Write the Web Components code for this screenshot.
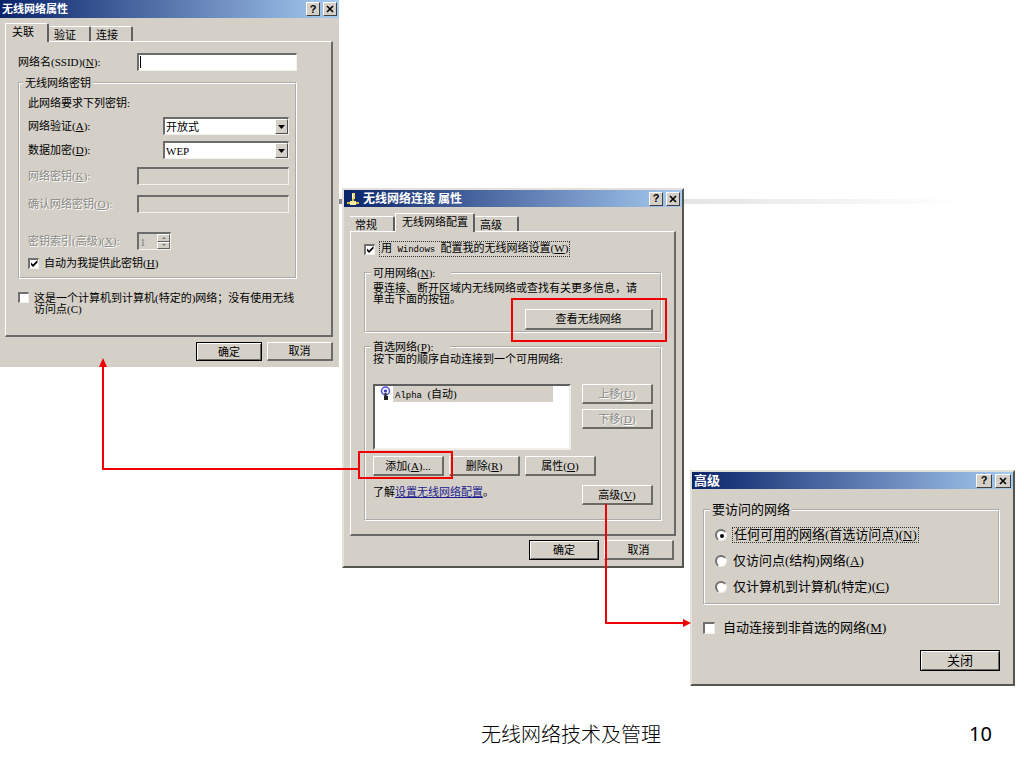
<!DOCTYPE html>
<html lang="zh-CN">
<head>
<meta charset="utf-8">
<title>无线网络技术及管理</title>
<style>
  body { margin: 0; background: #fff; color: #000; font: 11px/12px "Liberation Serif", "Noto Sans CJK SC", serif; }
  .mono { font: 9px/11px "Liberation Mono", monospace; white-space: pre; }
  a { color: #1c1c8c; }
  u { text-underline-offset: 1px; }
  p { margin: 0; }
  .ssid { left: 0; top: 0; width: 339px; --edge: 0px; --title-height: 18px; --tab-inset: 5px; --tab-top: 5px; }
  .conn { left: 342px; top: 188px; width: 342px; --tab-inset: 6px; --title-size: 12px; }
  .adv { left: 690px; top: 470px; width: 325px; font-size: 13px; line-height: 14px; --title-size: 13px; --cap-width: 16px; }
  .ssid xp-panel { padding: 8px 34px 19px 12px; }
  .conn xp-panel { padding: 8px 12px 13px 13px; }
  .ssid xp-group { margin: 3px 0 13px; --pad: 3px 6px 3px 8px; --legend-start: -5px; }
  .ssid xp-group xp-field { --label: 109px; }
  .ssid .hint { line-height: 22px; }
  .ssid .indent { --indent: 26px; --row: 24px; }
  .ssid .wide { --row: 28px; }
  .ssid .spin { --row: 22px; margin-top: 12px; }
  .ssid .auto { --row: 22px; }
  .ssid .adhoc { line-height: 11px; align-items: start; }
  .actions { display: flex; justify-content: flex-end; }
  .ssid .actions { gap: 5px; padding: 5px 6px 6px; --h: 19px; --w: 66px; }
  .conn .actions { gap: 5px; padding: 4px 8px 6px; --h: 20px; --w: 70px; }
  .conn .manage { --row: 18px; }
  .conn .available { margin-top: 9px; --pad: 4px 7px 1px 7px; --legend-end: 16px; line-height: 11px; }
  .conn .available xp-button { --w: 128px; --h: 21px; }
  .conn .preferred { margin-top: 8px; --pad: 0 7px 14px 7px; --legend-end: 16px; }
  .right { display: flex; justify-content: flex-end; margin-top: 4px; }
  .split { display: flex; justify-content: space-between; margin-top: 19px; --w: 71px; --h: 20px; }
  .stack { display: flex; flex-direction: column; gap: 5px; }
  .row { display: flex; gap: 5px; margin-top: 6px; --w: 71px; --h: 20px; }
  .more { display: flex; justify-content: space-between; margin-top: 9px; --w: 71px; --h: 20px; }
  .more p { line-height: 14px; }
  .adv xp-group { margin: 14px 13px 14px 11px; --pad: 5px 10px 3px 10px; --legend-start: -5px; }
  .adv xp-radio { --row: 26px; --mark: 12px; --gap: 5px; }
  .adv xp-check { --row: 18px; --mark: 12px; --gap: 7px; margin-left: 11px; }
  .adv .actions { padding: 13px 13px 13px 0; --w: 80px; --h: 21px; }
</style>
</head>
<body>
<slide-page>
  <xp-window class="ssid" heading="无线网络属性">
    <xp-tabs><xp-tab selected style="--tab-width:44px">关联</xp-tab><xp-tab style="--tab-width:42px">验证</xp-tab><xp-tab style="--tab-width:42px">连接</xp-tab></xp-tabs>
    <xp-panel>
      <xp-field kind="text" caret style="--label:119px;--row:24px">网络名(SSID)(<u>N</u>):</xp-field>
      <xp-group>
        <span slot="legend">无线网络密钥</span>
        <p class="hint">此网络要求下列密钥:</p>
        <xp-field class="indent" kind="select" value="开放式">网络验证(<u>A</u>):</xp-field>
        <xp-field class="indent" kind="select" value="WEP">数据加密(<u>D</u>):</xp-field>
        <xp-field class="wide" kind="text" disabled>网络密钥(<u>K</u>):</xp-field>
        <xp-field class="wide" kind="text" disabled>确认网络密钥(<u>O</u>):</xp-field>
        <xp-field class="spin" kind="spin" value="1" disabled>密钥索引(高级)(<u>X</u>):</xp-field>
        <xp-check class="auto" checked>自动为我提供此密钥(<u>H</u>)</xp-check>
      </xp-group>
      <xp-check class="adhoc">这是一个计算机到计算机(特定的)网络；没有使用无线<br>访问点(C)</xp-check>
    </xp-panel>
    <div class="actions"><xp-button primary>确定</xp-button><xp-button>取消</xp-button></div>
  </xp-window>

  <xp-window class="conn" heading="无线网络连接 属性" icon>
    <xp-tabs><xp-tab style="--tab-width:45px">常规</xp-tab><xp-tab selected style="--tab-width:80px">无线网络配置</xp-tab><xp-tab style="--tab-width:44px">高级</xp-tab></xp-tabs>
    <xp-panel>
      <xp-check class="manage" checked focused>用<span class="mono"> Windows </span>配置我的无线网络设置(<u>W</u>)</xp-check>
      <xp-group class="available">
        <span slot="legend">可用网络(<u>N</u>):</span>
        <p>要连接、断开区域内无线网络或查找有关更多信息，请<br>单击下面的按钮。</p>
        <div class="right"><xp-button>查看无线网络</xp-button></div>
      </xp-group>
      <xp-group class="preferred">
        <span slot="legend">首选网络(<u>P</u>):</span>
        <p>按下面的顺序自动连接到一个可用网络:</p>
        <div class="split">
          <xp-list><span class="mono">Alpha </span>(自动)</xp-list>
          <div class="stack"><xp-button disabled>上移(<u>U</u>)</xp-button><xp-button disabled>下移(<u>D</u>)</xp-button></div>
        </div>
        <div class="row"><xp-button>添加(<u>A</u>)...</xp-button><xp-button>删除(<u>R</u>)</xp-button><xp-button>属性(<u>O</u>)</xp-button></div>
        <div class="more"><p>了解<a href="#setup">设置无线网络配置</a>。</p><xp-button>高级(<u>V</u>)</xp-button></div>
      </xp-group>
    </xp-panel>
    <div class="actions"><xp-button primary>确定</xp-button><xp-button>取消</xp-button></div>
  </xp-window>

  <xp-window class="adv" heading="高级">
    <xp-group>
      <span slot="legend">要访问的网络</span>
      <xp-radio checked focused>任何可用的网络(首选访问点)(<u>N</u>)</xp-radio>
      <xp-radio>仅访问点(结构)网络(<u>A</u>)</xp-radio>
      <xp-radio>仅计算机到计算机(特定)(<u>C</u>)</xp-radio>
    </xp-group>
    <xp-check>自动连接到非首选的网络(<u>M</u>)</xp-check>
    <div class="actions"><xp-button primary>关闭</xp-button></div>
  </xp-window>

  <flow-arrows></flow-arrows>
  <span slot="footer">无线网络技术及管理</span>
  <span slot="number">10</span>
</slide-page>

<script>
const define = (name, render) => customElements.define(name, class extends HTMLElement {
  constructor() {
    super();
    this.attachShadow({ mode: "open" }).innerHTML = render(this);
  }
});

define("slide-page", () => `
  <style>
    :host { display: flex; flex-direction: column; position: relative; min-height: 100vh; overflow: hidden; }
    main { flex: 1; }
    .rule { position: absolute; left: 0; right: 0; top: 199px; height: 5px;
      background: linear-gradient(90deg, #505068, #888894 33%, #e4e4e4 67%, #fff 94%); }
    footer { display: grid; grid-template-columns: 1fr auto 1fr; align-items: center; padding: 0 32px 19px 150px;
      font: 300 20px/30px "Noto Sans CJK SC", sans-serif; }
    .num { grid-column: 3; justify-self: end; font: 20px/30px "Noto Sans", sans-serif; }
    .name { grid-column: 2; }
  </style>
  <main><div class="rule"></div><slot></slot></main>
  <footer><div class="name"><slot name="footer"></slot></div><div class="num"><slot name="number"></slot></div></footer>`);

define("xp-window", el => `
  <style>
    :host { display: block; position: absolute; box-sizing: border-box; background: #d4d0c8;
      border: var(--edge, 2px) solid; border-color: #e4e1da #55554f #55554f #e4e1da; }
    header { display: flex; align-items: center; gap: 3px; box-sizing: border-box; height: var(--title-height, 17px); padding: 0 2px;
      background: linear-gradient(90deg, #0a246a, #a6caf0); color: #fff; }
    h2 { flex: 1; margin: 0; font: bold var(--title-size, 11px)/16px "Liberation Serif", "Noto Sans CJK SC", serif; }
    button { display: grid; place-items: center; width: var(--cap-width, 14px); height: 14px; padding: 0; box-sizing: border-box;
      background: #d4d0c8; border: 1px solid; border-color: #fff #404040 #404040 #fff; color: #000;
      font: bold 11px/11px "Liberation Sans", sans-serif; }
  </style>
  <header>
    ${el.hasAttribute("icon") ? `<svg width="14" height="14" viewBox="0 0 14 14"><path d="M1 11h12M7 7v4" stroke="#e0bc40" stroke-width="2"/><path d="M6 1h3v6H6z" fill="#f4d868"/><path d="M4 9h6v4H4z" fill="#fff0a0"/><path d="M6 2h1v4H6z" fill="#fff"/></svg>` : ""}
    <h2>${el.getAttribute("heading")}</h2>
    <button type="button" aria-label="帮助">?</button>
    <button type="button" aria-label="关闭窗口"><svg width="8" height="8" viewBox="0 0 8 8"><path d="M1 1l6 6M7 1L1 7" stroke="#000" stroke-width="1.6"/></svg></button>
  </header>
  <slot></slot>`);

define("xp-tabs", () => `
  <style>:host { display: flex; align-items: flex-end; height: 18px; margin: var(--tab-top, 6px) var(--tab-inset) 0; }
  ::slotted(*) { flex: none; }</style>
  <slot></slot>`);

define("xp-tab", el => `
  <style>
    :host { display: block; width: var(--tab-width); }
    button { display: block; width: 100%; height: 15px; padding: 1px 0 0 5px; box-sizing: border-box; text-align: left;
      background: #d4d0c8; border: 0; border-top: 1px solid #fff; border-right: 2px solid #606060; border-top-right-radius: 2px;
      font: inherit; line-height: 12px; color: #000; }
    :host([selected]) button { height: 19px; margin-bottom: -1px; padding: 2px 0 4px 6px; border-left: 1px solid #fff; position: relative; }
  </style>
  <button type="button" role="tab" aria-selected="${el.hasAttribute("selected")}"><slot></slot></button>`);

define("xp-panel", () => `
  <style>:host { display: block; margin: 0 6px 0 var(--tab-inset);
    border: solid; border-width: 1px 2px 2px 1px; border-color: #fff #696969 #696969 #fff; }</style>
  <slot></slot>`);

define("xp-group", () => `
  <style>
    :host { display: block; }
    fieldset { margin: 0; padding: var(--pad); border: 2px groove #fff; min-width: 0; }
    legend { padding: 0 var(--legend-end, 2px) 0 2px; margin-left: var(--legend-start, -2px); line-height: inherit; }
    :host([class]) legend { line-height: 12px; }
  </style>
  <fieldset><legend><slot name="legend"></slot></legend><slot></slot></fieldset>`);

define("xp-field", el => {
  const kind = el.getAttribute("kind"), off = el.hasAttribute("disabled") ? "disabled" : "", v = el.getAttribute("value") || "";
  const control = {
    text: `<input id="c" type="text" ${off}>`,
    select: `<select id="c"><option>${v}</option></select><i></i>`,
    spin: `<input id="c" type="text" value="${v}" ${off}><span class="steps"><button type="button" ${off} aria-label="增加"><svg width="4" height="2"><path d="M0 2L2 0l2 2z" fill="#777"/></svg></button><button type="button" ${off} aria-label="减少"><svg width="4" height="2"><path d="M0 0h4L2 2z" fill="#777"/></svg></button></span>`
  }[kind];
  return `
  <style>
    :host { display: grid; grid-template-columns: var(--label) 1fr; align-items: center; height: var(--row); }
    label { white-space: nowrap; }
    :host([disabled]) label { color: #8a8a86; text-shadow: 1px 1px #fff; }
    .box { display: flex; position: relative; height: 18px; box-sizing: border-box; margin-left: var(--indent, 0); background: #fff;
      border: solid; border-width: 2px 1px 1px 2px; border-color: #6c6c6c #f4f2ee #f4f2ee #6c6c6c; }
    :host([disabled]) .box { background: #d4d0c8; }
    :host([kind="spin"]) .box { width: 34px; }
    :host([caret]) .box::before { content: ""; position: absolute; left: 1px; top: 1px; width: 1px; height: 12px; background: #000; }
    input, select { flex: 1; min-width: 0; width: 0; padding: 0 1px; margin: 0; border: 0; outline: 0; background: none; appearance: none;
      font: inherit; line-height: 14px; color: #000; }
    input:disabled { color: #808080; }
    i { position: absolute; right: 0; top: 0; width: 11px; height: 13px; pointer-events: none; background: #d4d0c8;
      border: 1px solid; border-color: #fff #505050 #505050 #fff; }
    i::before { content: ""; position: absolute; left: 2px; top: 5px; width: 7px; height: 4px; background: #000; clip-path: polygon(0 0, 100% 0, 50% 100%); }
    .steps { display: grid; width: 13px; }
    .steps button { display: grid; place-items: center; padding: 0; min-height: 0; background: #d4d0c8; border: 1px solid; border-color: #fff #606060 #606060 #fff; }
    svg { display: block; }
  </style>
  <label for="c"><slot></slot></label><div class="box">${control}</div>`;
});

const choice = (type, extra) => el => `
  <style>
    :host { display: flex; align-items: center; min-height: var(--row, 0); gap: var(--gap, 4px); white-space: nowrap; }
    input { flex: none; display: grid; place-items: center; appearance: none; width: var(--mark, 11px); height: var(--mark, 11px); margin: 0; box-sizing: border-box; background: #fff;
      border: solid; border-width: 2px 1px 1px 2px; border-color: #707070 #f2f0ea #f2f0ea #707070; }
    label { padding: 1px; }
    :host([focused]) label { padding: 0 1px; border: 1px dotted #333; }
    ${extra}
  </style>
  <input id="c" type="${type}" ${el.hasAttribute("checked") ? "checked" : ""}><label for="c"><slot></slot></label>`;

define("xp-check", choice("checkbox", `
  input:checked::before { content: ""; width: 7px; height: 7px; background: #000; clip-path: polygon(0 29%, 36% 64%, 100% 0, 100% 36%, 36% 100%, 0 64%); }`));
define("xp-radio", choice("radio", `
  input { border-radius: 50%; }
  input:checked::before { content: ""; width: 4px; height: 4px; border-radius: 50%; background: #000; }`));

define("xp-button", el => `
  <style>
    :host { display: block; width: var(--w); }
    button { display: block; width: 100%; height: var(--h); padding: 0; box-sizing: border-box; background: #d4d0c8; color: #000; font: inherit; line-height: 14px; white-space: nowrap;
      border: solid; border-width: 1px 2px 2px 1px; border-color: #fff #6a6a66 #6a6a66 #fff; }
    :host([primary]) button { border: 1px solid #000; box-shadow: inset 1px 1px #fff, inset -1px -1px #6a6a66; }
    button:disabled { color: #8a8a86; text-shadow: 1px 1px #fff; }
  </style>
  <button type="button" ${el.hasAttribute("disabled") ? "disabled" : ""}><slot></slot></button>`);

define("xp-list", () => `
  <style>
    :host { display: block; width: 198px; height: 66px; box-sizing: border-box; background: #fff;
      border: solid; border-width: 2px; border-color: #606060 #f0eee8 #f0eee8 #606060; }
    div { display: flex; gap: 2px; padding-left: 5px; width: 173px; height: 16px; }
    span { flex: 1; padding-left: 2px; background: #d4d0c8; line-height: 16px; white-space: pre; }
  </style>
  <div role="listbox"><svg width="11" height="16" viewBox="0 0 11 16"><circle cx="5.5" cy="5" r="4" fill="#eef" stroke="#5050dd" stroke-width="1.5"/><circle cx="5.5" cy="5" r="1.6" fill="#4040b0"/><path d="M4.5 7h2v3H8v4H4v-4h.5z" fill="#222"/></svg><span role="option"><slot></slot></span></div>`);

define("flow-arrows", () => `
  <style>:host { display: block; position: absolute; left: 0; top: 0; pointer-events: none; } svg { display: block; }</style>
  <svg width="700" height="640" viewBox="0 0 700 640" fill="none" stroke="#f00000" stroke-width="2">
    <path d="M359 452h93v26h-93zM512 299h154v42H512z"/>
    <path d="M358 469H103V366M606 504v119h78"/>
    <path d="M103 358l4 9h-8zM691 623l-8-4v8z" fill="#f00000" stroke="none"/>
  </svg>`);
</script>
</body>
</html>
